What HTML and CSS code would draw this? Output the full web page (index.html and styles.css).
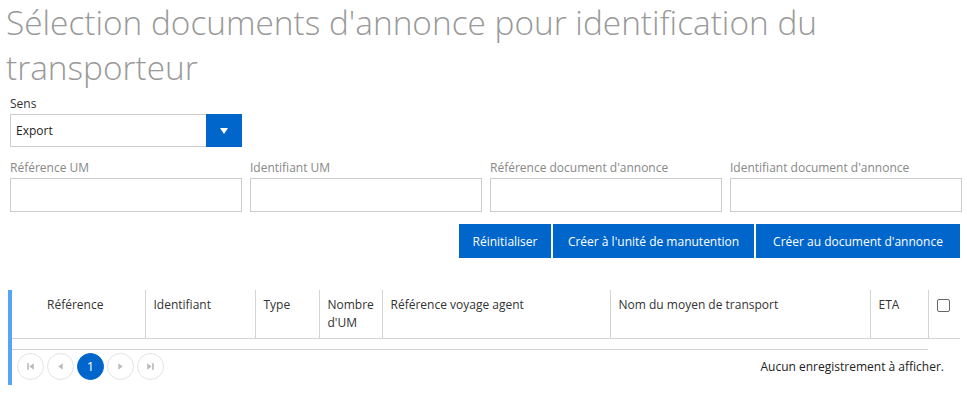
FILE: index.html
```html
<!DOCTYPE html>
<html lang="fr">
<head>
    <meta charset="UTF-8">
    <meta name="viewport" content="width=device-width, initial-scale=1.0">
    <title>Sélection documents d'annonce</title>
    <link rel="stylesheet" href="styles.css">
</head>
<body>
    <div class="page">
        <h1>Sélection documents d'annonce pour identification du transporteur</h1>

        <div class="field sens">
            <label>Sens</label>
            <div class="select">
                <span class="select-value">Export</span>
                <span class="select-btn"><span class="caret"></span></span>
            </div>
        </div>

        <div class="filters">
            <div class="field">
                <label class="muted">Référence UM</label>
                <input type="text">
            </div>
            <div class="field">
                <label class="muted">Identifiant UM</label>
                <input type="text">
            </div>
            <div class="field">
                <label class="muted">Référence document d'annonce</label>
                <input type="text">
            </div>
            <div class="field">
                <label class="muted">Identifiant document d'annonce</label>
                <input type="text">
            </div>
        </div>

        <div class="actions">
            <button class="btn btn-reset">Réinitialiser</button>
            <button class="btn btn-um">Créer à l'unité de manutention</button>
            <button class="btn btn-doc">Créer au document d'annonce</button>
        </div>

        <div class="grid">
            <table>
                <thead>
                    <tr>
                        <th class="col-ref center">Référence</th>
                        <th class="col-id">Identifiant</th>
                        <th class="col-type">Type</th>
                        <th class="col-nb">Nombre d'UM</th>
                        <th class="col-voy">Référence voyage agent</th>
                        <th class="col-nom">Nom du moyen de transport</th>
                        <th class="col-eta">ETA</th>
                        <th class="col-chk"><span class="checkbox"></span></th>
                    </tr>
                </thead>
            </table>
            <div class="grid-body"></div>
            <div class="pager">
                <div class="pages">
                    <span class="pg"><svg width="10" height="10" viewBox="0 0 10 10"><rect x="2" y="2" width="1.5" height="6" fill="#bbb"/><path d="M8 2 L4 5 L8 8 Z" fill="#bbb"/></svg></span>
                    <span class="pg"><svg width="10" height="10" viewBox="0 0 10 10"><path d="M7 2 L3 5 L7 8 Z" fill="#bbb"/></svg></span>
                    <span class="pg active">1</span>
                    <span class="pg"><svg width="10" height="10" viewBox="0 0 10 10"><path d="M3 2 L7 5 L3 8 Z" fill="#bbb"/></svg></span>
                    <span class="pg"><svg width="10" height="10" viewBox="0 0 10 10"><path d="M2 2 L6 5 L2 8 Z" fill="#bbb"/><rect x="6.5" y="2" width="1.5" height="6" fill="#bbb"/></svg></span>
                </div>
                <div class="pager-info">Aucun enregistrement à afficher.</div>
            </div>
        </div>
    </div>
</body>
</html>
```

FILE: styles.css
```css
body {
    margin: 0;
    font-family: "Open Sans", "Noto Sans", sans-serif;
    font-size: 12px;
    color: #333;
    background-color: white;
}
.page {
    padding: 0 5px 0 10px;
}
h1 {
    font-family: "Open Sans", sans-serif;
    font-weight: 300;
    font-size: 33.4px;
    line-height: 45px;
    color: #999;
    margin: 0 0 0 -4px;
    padding-top: 0;
    max-width: 880px;
}
.field label {
    display: block;
    line-height: 16px;
    margin-bottom: 2px;
}
.field .muted {
    color: #888;
}
.sens {
    margin-top: 6px;
}
.select {
    display: flex;
    width: 232px;
    height: 33px;
    box-sizing: border-box;
    border: 1px solid #ccc;
    border-right: none;
}
.select-value {
    flex: 1;
    padding-left: 5px;
    line-height: 31px;
    color: #222;
}
.select-btn {
    width: 36px;
    margin: -1px 0;
    background-color: #0066cc;
    display: flex;
    align-items: center;
    justify-content: center;
}
.caret {
    width: 0;
    height: 0;
    border-left: 4px solid transparent;
    border-right: 4px solid transparent;
    border-top: 6px solid white;
}
.filters {
    display: grid;
    grid-template-columns: repeat(4, 232px);
    gap: 8px;
    margin-top: 13px;
}
.filters input {
    display: block;
    width: 100%;
    height: 34px;
    box-sizing: border-box;
    border: 1px solid #ccc;
    margin: 0;
}
.actions {
    display: flex;
    justify-content: flex-end;
    gap: 2px;
    margin-top: 12px;
    padding-right: 2px;
}
.btn {
    background-color: #0066cc;
    color: white;
    border: none;
    height: 34px;
    padding: 0;
    font-family: "Open Sans", "Noto Sans", sans-serif;
    font-size: 12px;
}
.btn-reset { width: 92px; }
.btn-um { width: 201px; }
.btn-doc { width: 204px; }
.grid {
    margin-top: 32px;
    margin-left: -2px;
    border-left: 4px solid #55a5f5;
    width: 948px;
    height: 95px;
}
table {
    width: 100%;
    border-collapse: collapse;
    table-layout: fixed;
}
th {
    height: 48px;
    box-sizing: border-box;
    vertical-align: top;
    text-align: left;
    font-weight: normal;
    padding: 6px 8px 0 8px;
    line-height: 18px;
    border-left: 1px solid #d4d4d4;
    border-bottom: 1px solid #d4d4d4;
}
th:first-child { border-left: none; }
th.center { text-align: center; padding-right: 14px; }
.col-ref { width: 133px; }
.col-id { width: 110px; }
.col-type { width: 64px; }
.col-nb { width: 63px; }
.col-voy { width: 228px; }
.col-nom { width: 260px; }
.col-eta { width: 58px; }
.col-chk { padding-left: 8px; }
.checkbox {
    display: inline-block;
    width: 11px;
    height: 11px;
    border: 1px solid #666;
    border-radius: 2px;
    margin-top: 3px;
}
.grid-body {
    height: 10px;
    width: 916px;
    border-bottom: 1px solid #d4d4d4;
}
.pager {
    display: flex;
    align-items: center;
    justify-content: space-between;
    padding: 3px 16px 0 5px;
}
.pages {
    display: flex;
    gap: 3px;
}
.pg {
    width: 27px;
    height: 27px;
    box-sizing: border-box;
    border: 1px solid #e3e3e3;
    border-radius: 50%;
    display: flex;
    align-items: center;
    justify-content: center;
}
.pg svg {
    width: 11px;
    height: 11px;
}
.pg.active {
    background-color: #0066cc;
    border-color: #0066cc;
    color: white;
    font-size: 13px;
}
.pager-info {
    color: #222;
}
```
